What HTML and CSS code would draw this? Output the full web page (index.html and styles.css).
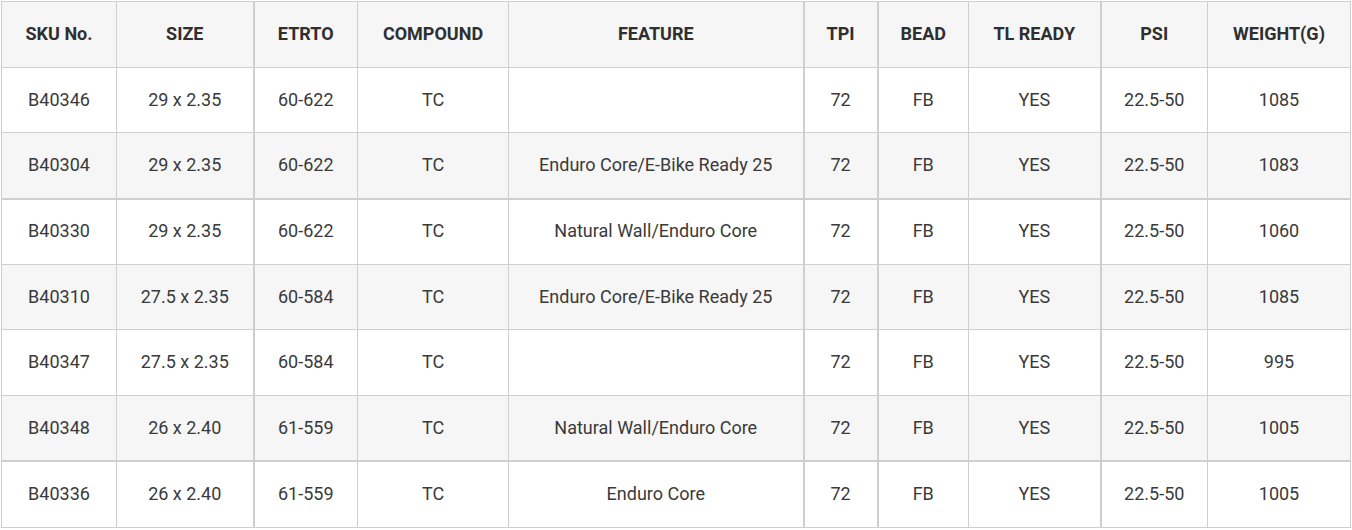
FILE: index.html
```html
<!DOCTYPE html>
<html lang="en">
<head>
<meta charset="utf-8">
<title>Tire specifications</title>
<link rel="stylesheet" href="styles.css">
</head>
<body>
<table class="spec">
  <colgroup>
    <col class="c-sku"><col class="c-size"><col class="c-etrto"><col class="c-comp"><col class="c-feat">
    <col class="c-tpi"><col class="c-bead"><col class="c-tl"><col class="c-psi"><col class="c-wt">
  </colgroup>
  <thead>
    <tr>
      <th>SKU No.</th><th>SIZE</th><th class="tl">ETRTO</th><th>COMPOUND</th><th>FEATURE</th>
      <th class="tl">TPI</th><th class="tl">BEAD</th><th>TL READY</th><th class="tl">PSI</th><th>WEIGHT(G)</th>
    </tr>
  </thead>
  <tbody>
    <tr>
      <td>B40346</td><td>29 x 2.35</td><td class="tl">60-622</td><td>TC</td><td></td>
      <td class="tl">72</td><td class="tl">FB</td><td>YES</td><td class="tl">22.5-50</td><td>1085</td>
    </tr>
    <tr class="alt">
      <td>B40304</td><td>29 x 2.35</td><td class="tl">60-622</td><td>TC</td><td>Enduro Core/E-Bike Ready 25</td>
      <td class="tl">72</td><td class="tl">FB</td><td>YES</td><td class="tl">22.5-50</td><td>1083</td>
    </tr>
    <tr class="tt">
      <td>B40330</td><td>29 x 2.35</td><td class="tl">60-622</td><td>TC</td><td>Natural Wall/Enduro Core</td>
      <td class="tl">72</td><td class="tl">FB</td><td>YES</td><td class="tl">22.5-50</td><td>1060</td>
    </tr>
    <tr class="alt">
      <td>B40310</td><td>27.5 x 2.35</td><td class="tl">60-584</td><td>TC</td><td>Enduro Core/E-Bike Ready 25</td>
      <td class="tl">72</td><td class="tl">FB</td><td>YES</td><td class="tl">22.5-50</td><td>1085</td>
    </tr>
    <tr>
      <td>B40347</td><td>27.5 x 2.35</td><td class="tl">60-584</td><td>TC</td><td></td>
      <td class="tl">72</td><td class="tl">FB</td><td>YES</td><td class="tl">22.5-50</td><td>995</td>
    </tr>
    <tr class="alt">
      <td>B40348</td><td>26 x 2.40</td><td class="tl">61-559</td><td>TC</td><td>Natural Wall/Enduro Core</td>
      <td class="tl">72</td><td class="tl">FB</td><td>YES</td><td class="tl">22.5-50</td><td>1005</td>
    </tr>
    <tr class="tt">
      <td>B40336</td><td>26 x 2.40</td><td class="tl">61-559</td><td>TC</td><td>Enduro Core</td>
      <td class="tl">72</td><td class="tl">FB</td><td>YES</td><td class="tl">22.5-50</td><td>1005</td>
    </tr>
  </tbody>
</table>
</body>
</html>
```

FILE: styles.css
```css
html, body {
  margin: 0;
  padding: 0;
  background: #ffffff;
}

body {
  padding: 1px 0 0 1px;
  font-family: Roboto, "Liberation Sans", Arial, sans-serif;
  color: #333333;
}

.spec {
  width: 1350px;
  table-layout: fixed;
  border-collapse: collapse;
  font-size: 18px;
}

.c-sku { width: 115px; }
.c-size { width: 137px; }
.c-etrto { width: 104px; }
.c-comp { width: 151px; }
.c-feat { width: 295px; }
.c-tpi { width: 74px; }
.c-bead { width: 91px; }
.c-tl { width: 132px; }
.c-psi { width: 107px; }
.c-wt { width: 143px; }

.spec th,
.spec td {
  border: 1px solid #cfcfcf;
  height: 65.7px;
  padding: 0 4px 2px;
  text-align: center;
  vertical-align: middle;
  box-sizing: border-box;
}

.spec th {
  font-weight: 700;
  background: #f6f6f6;
  color: #2f2f2f;
}

.spec td {
  font-weight: 400;
  color: #3a3a3a;
}

.spec tr.alt td {
  background: #f6f6f6;
}

.spec .tl {
  border-left-width: 2px;
}

.spec tr.tt td {
  border-top-width: 2px;
}
```
